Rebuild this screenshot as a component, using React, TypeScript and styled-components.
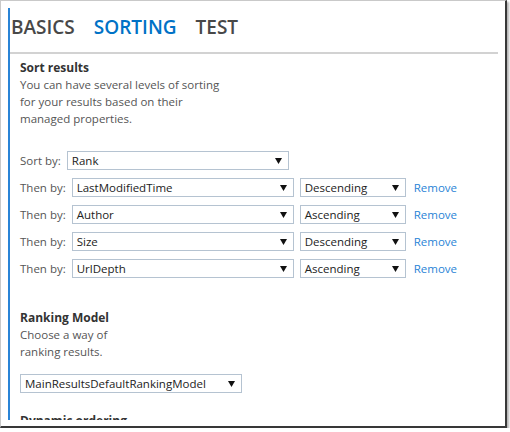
import React from "react"
import styled, { createGlobalStyle } from "styled-components"

const GlobalStyle = createGlobalStyle`
  body {
    margin: 0;
    background: #fff;
    font-family: "Open Sans", "Noto Sans", sans-serif;
  }
`

const Frame = styled.div`
  box-sizing: border-box;
  width: 507px;
  height: 428px;
  padding: 7px 7px 6px 7px;
  background: #fff;
  border-top: 1px solid #c9c9c9;
  border-left: 1px solid #c9c9c9;
  border-right: 2px solid #383838;
  border-bottom: 2px solid #383838;
  box-shadow: 2px 2px 2px rgba(0, 0, 0, 0.3);
`

const Pane = styled.div`
  height: 100%;
  overflow: hidden;
  border-left: 2px solid #2a84d6;
`

const Tabs = styled.div`
  display: flex;
  gap: 19px;
  height: 34px;
  padding: 10px 0 0 1px;
  border-bottom: 2px solid #d2d2d2;
`

const Tab = styled.span<{ $active?: boolean }>`
  font-size: 19px;
  font-weight: 600;
  line-height: 19px;
  color: ${(p) => (p.$active ? "#0072c6" : "#484848")};
`

const Body = styled.div`
  padding: 5px 0 0 10px;
`

const SectionTitle = styled.div<{ $gap?: number }>`
  margin-top: ${(p) => p.$gap ?? 0}px;
  font-size: 12px;
  font-weight: 700;
  line-height: 17px;
  color: #333;
`

const Description = styled.div<{ $width: number }>`
  width: ${(p) => p.$width}px;
  font-size: 11.5px;
  line-height: 17px;
  color: #555;
`

const SortList = styled.div`
  display: flex;
  flex-direction: column;
  gap: 8px;
  margin-top: 24px;
`

const Row = styled.div`
  display: flex;
  align-items: center;
  gap: 6px;
  height: 19px;
`

const Label = styled.span`
  font-size: 11.5px;
  color: #555;
`

const Dropdown = styled.div<{ $width: number; $gap?: number }>`
  box-sizing: border-box;
  display: flex;
  align-items: center;
  justify-content: space-between;
  width: ${(p) => p.$width}px;
  height: 19px;
  margin-top: ${(p) => p.$gap ?? 0}px;
  padding: 0 6px 0 4px;
  border: 1px solid #b5c3d1;
  background: #fff;
  font-size: 11.5px;
  color: #222;
`

const RemoveLink = styled.a`
  margin-left: 2px;
  font-size: 11.5px;
  color: #2a84d6;
  text-decoration: none;
  cursor: pointer;
`

const Arrow = () => (
  <svg width="7" height="6" viewBox="0 0 7 6">
    <polygon points="0,0 7,0 3.5,6" fill="#111" />
  </svg>
)

const Select = ({ value, width, gap }: { value: string; width: number; gap?: number }) => (
  <Dropdown $width={width} $gap={gap}>
    <span>{value}</span>
    <Arrow />
  </Dropdown>
)

const thenBy = [
  { field: "LastModifiedTime", order: "Descending" },
  { field: "Author", order: "Ascending" },
  { field: "Size", order: "Descending" },
  { field: "UrlDepth", order: "Ascending" },
]

export default function App() {
  return (
    <>
      <GlobalStyle />
      <Frame>
        <Pane>
          <Tabs>
            <Tab>BASICS</Tab>
            <Tab $active>SORTING</Tab>
            <Tab>TEST</Tab>
          </Tabs>
          <Body>
            <SectionTitle>Sort results</SectionTitle>
            <Description $width={200}>
              You can have several levels of sorting for your results based on their managed properties.
            </Description>
            <SortList>
              <Row>
                <Label>Sort by:</Label>
                <Select value="Rank" width={222} />
              </Row>
              {thenBy.map((r) => (
                <Row key={r.field}>
                  <Label>Then by:</Label>
                  <Select value={r.field} width={222} />
                  <Select value={r.order} width={106} />
                  <RemoveLink>Remove</RemoveLink>
                </Row>
              ))}
            </SortList>
            <SectionTitle $gap={31}>Ranking Model</SectionTitle>
            <Description $width={100}>Choose a way of ranking results.</Description>
            <Select value="MainResultsDefaultRankingModel" width={222} gap={14} />
            <SectionTitle $gap={19}>Dynamic ordering</SectionTitle>
          </Body>
        </Pane>
      </Frame>
    </>
  )
}
